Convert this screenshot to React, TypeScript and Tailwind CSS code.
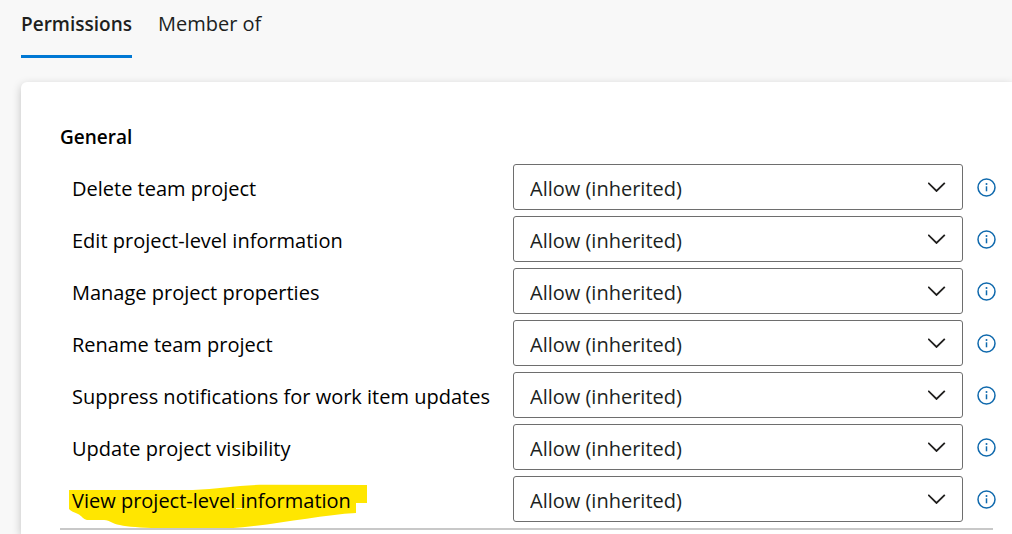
const permissions = [
  { id: "delete", label: "Delete team project" },
  { id: "edit", label: "Edit project-level information" },
  { id: "manage", label: "Manage project properties" },
  { id: "rename", label: "Rename team project" },
  { id: "suppress", label: "Suppress notifications for work item updates" },
  { id: "visibility", label: "Update project visibility" },
  { id: "view", label: "View project-level information", highlighted: true },
];

function Highlight() {
  return (
    <svg
      aria-hidden="true"
      className="absolute top-2 -left-[3px] h-[45px] w-[298px]"
      viewBox="0 0 298 45"
    >
      <path
        fill="#ffe600"
        d="M0 6H124C150 5 170 1 196 .7L298 1V19H287V29C250 31 200 42 161 44.3C130 45 95 45 71 43.5C58 42.5 48 41 44 39C40 37 38 36 35 36H18C14 35 13 32 9 30C5 28.500 2 27 0 25Z"
      />
      <path stroke="#fff7b0" strokeWidth="1" d="M167 24.500h6" />
    </svg>
  );
}

function ChevronIcon() {
  return (
    <svg
      aria-hidden="true"
      className="pointer-events-none col-start-1 row-start-1 mr-[17px] h-[10px] w-[18px] self-center justify-self-end"
      viewBox="0 0 18 10"
      fill="none"
      stroke="#201f1e"
      strokeWidth="1.8"
    >
      <path d="M.2 .8 8.500 9 16.800 .8" />
    </svg>
  );
}

function InfoIcon() {
  return (
    <svg
      aria-hidden="true"
      className="size-[19px]"
      viewBox="0 0 19 19"
      fill="none"
      stroke="#0f69ad"
      strokeWidth="1.5"
    >
      <circle cx="9.500" cy="9.500" r="8.500" />
      <path d="M9.500 8.300v5" />
      <circle cx="9.500" cy="5.900" r="1" fill="#0f69ad" stroke="none" />
    </svg>
  );
}

function PermissionRow({ id, label, highlighted }: { id: string; label: string; highlighted?: boolean }) {
  return (
    <div className="flex h-[46px] items-center">
      <div className="relative ml-3 flex h-full w-[441px] shrink-0 items-center">
        {highlighted && <Highlight />}
        <label htmlFor={id} className="relative whitespace-nowrap pt-1 text-black">
          {label}
        </label>
      </div>
      <div className="grid h-full flex-1">
        <select
          id={id}
          defaultValue="inherited"
          className="col-start-1 row-start-1 w-full appearance-none rounded-[3px] border border-[#6e6e6e] bg-white pt-1 pr-12 pl-4 text-[#201f1e]"
        >
          <option value="inherited">Allow (inherited)</option>
          <option value="allow">Allow</option>
          <option value="deny">Deny</option>
          <option value="unset">Not set</option>
        </select>
        <ChevronIcon />
      </div>
      <button type="button" aria-label={`About ${label}`} className="ml-[14px] shrink-0">
        <InfoIcon />
      </button>
    </div>
  );
}

export default function App() {
  return (
    <div className="flex min-h-screen flex-col overflow-hidden bg-[#f8f8f8] pl-[21px] font-['Open_Sans','Noto_Sans',sans-serif] text-[20px] leading-7">
      <nav className="flex h-[58px] gap-[26px] text-[#201f1e]">
        <a href="#permissions" aria-current="page" className="border-b-[3px] border-[#0078d4] pt-[10px] text-[19px] font-semibold">
          Permissions
        </a>
        <a href="#member-of" className="pt-[10px]">
          Member of
        </a>
      </nav>
      <main className="mt-6 flex-1 rounded-tl-[6px] bg-white pt-[41px] pr-4 pl-[39px] shadow-[0_3px_10px_rgba(0,0,0,0.22)]">
        <h2 className="text-[19px] font-semibold text-black">General</h2>
        <div className="mt-[13px] flex flex-col gap-[6px]">
          {permissions.map((permission) => (
            <PermissionRow key={permission.id} {...permission} />
          ))}
        </div>
        <hr className="relative mt-[6px] mr-[3px] border-t-2 border-[#c8c8c8]" />
      </main>
    </div>
  );
}
